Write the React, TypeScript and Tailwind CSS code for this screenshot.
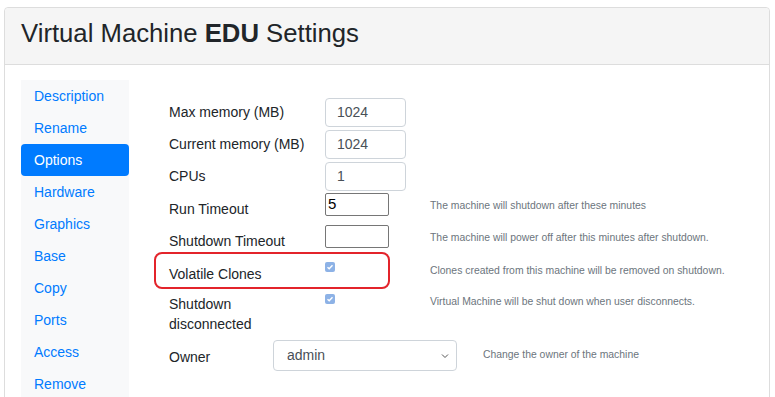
import React from "react";

const tabs = ["Description", "Rename", "Options", "Hardware", "Graphics", "Base", "Copy", "Ports", "Access", "Remove"];

const Check = () => (
    <div className="w-[10px] h-[10px] rounded-[2px] bg-[#8db2e6] flex items-center justify-center">
        <svg width="8" height="8" viewBox="0 0 8 8">
            <path d="M1.5 4.2 L3.2 5.8 L6.5 2.3" stroke="#fff" strokeWidth="1.4" fill="none" />
        </svg>
    </div>
);

const NumInput = ({ value }: { value: string }) => (
    <div className="w-[81px] h-[29px] border border-[#ced4da] rounded-[4px] bg-white flex items-center pl-[11px] text-[14px] text-[#495057]">
        {value}
    </div>
);

const PlainInput = ({ value }: { value?: string }) => (
    <div className="w-[64px] h-[23px] border border-[#767676] rounded-[2px] bg-white flex items-center pl-[2px] text-[15px] text-black">
        {value}
    </div>
);

const Help = ({ children }: { children: React.ReactNode }) => (
    <span className="text-[10.4px] text-[#6c757d]">{children}</span>
);

export default function App() {
    return (
        <div className="w-[775px] h-[397px] overflow-hidden bg-white pl-[4px] pt-[7px]" style={{ fontFamily: '"Liberation Sans", Arial, sans-serif' }}>
            <div className="w-[766px] h-[420px] border border-[#ddd] rounded-[4px]">
                <div className="h-[57px] bg-[#f5f5f5] border-b border-[#ddd] rounded-t-[4px] flex items-center pl-[16px] pb-[5px]">
                    <h1 className="text-[25.7px] text-[#212529]">
                        Virtual Machine <b>EDU</b> Settings
                    </h1>
                </div>
                <div className="flex pl-[16px] pt-[15px]">
                    <div className="w-[108px] bg-[#f8f9fa] flex flex-col shrink-0">
                        {tabs.map((t) => (
                            <div
                                key={t}
                                className={
                                    t === "Options"
                                        ? "h-[32px] flex items-center pl-[13px] text-[14px] rounded-[4px] bg-[#007bff] text-white"
                                        : "h-[32px] flex items-center pl-[13px] text-[14px] text-[#007bff]"
                                }
                            >
                                {t}
                            </div>
                        ))}
                    </div>
                    <div className="pl-[40px] pt-[16px] text-[14px] text-[#212529]">
                        <div className="flex items-center h-[32px]">
                            <div className="w-[156px]">Max memory (MB)</div>
                            <NumInput value="1024" />
                        </div>
                        <div className="flex items-center h-[32px]">
                            <div className="w-[156px]">Current memory (MB)</div>
                            <NumInput value="1024" />
                        </div>
                        <div className="flex items-center h-[32px]">
                            <div className="w-[156px]">CPUs</div>
                            <NumInput value="1" />
                        </div>
                        <div className="flex h-[32px]">
                            <div className="w-[156px] pt-[7px]">Run Timeout</div>
                            <div className="w-[105px] pt-[1px]"><PlainInput value="5" /></div>
                            <div className="pt-[2px]"><Help>The machine will shutdown after these minutes</Help></div>
                        </div>
                        <div className="flex h-[32px]">
                            <div className="w-[156px] pt-[7px]">Shutdown Timeout</div>
                            <div className="w-[105px] pt-[1px]"><PlainInput /></div>
                            <div className="pt-[2px]"><Help>The machine will power off after this minutes after shutdown.</Help></div>
                        </div>
                        <div className="flex h-[32px] relative">
                            <div className="absolute left-[-15px] top-[-4px] w-[236px] h-[37px] border-2 border-[#e3242b] rounded-[8px]" />
                            <div className="w-[156px] pt-[8px]">Volatile Clones</div>
                            <div className="w-[105px] pt-[6px]"><Check /></div>
                            <div className="pt-[3px]"><Help>Clones created from this machine will be removed on shutdown.</Help></div>
                        </div>
                        <div className="flex h-[52px]">
                            <div className="w-[156px] pt-[6px] leading-[20px]">
                                Shutdown
                                <br />
                                disconnected
                            </div>
                            <div className="w-[105px] pt-[6px]"><Check /></div>
                            <div className="pt-[2px]"><Help>Virtual Machine will be shut down when user disconnects.</Help></div>
                        </div>
                        <div className="flex items-start h-[32px]">
                            <div className="w-[104px] pt-[7px]">Owner</div>
                            <div className="w-[184px] h-[31px] border border-[#ced4da] rounded-[4px] bg-white flex items-center justify-between pl-[13px] pr-[7px] text-[14px] text-[#495057]">
                                <span>admin</span>
                                <svg width="8" height="6" viewBox="0 0 8 6">
                                    <path d="M1 1.5 L4 4.5 L7 1.5" stroke="#555" strokeWidth="1" fill="none" />
                                </svg>
                            </div>
                            <div className="pl-[26px] pt-[3px]"><Help>Change the owner of the machine</Help></div>
                        </div>
                    </div>
                </div>
            </div>
        </div>
    );
}
